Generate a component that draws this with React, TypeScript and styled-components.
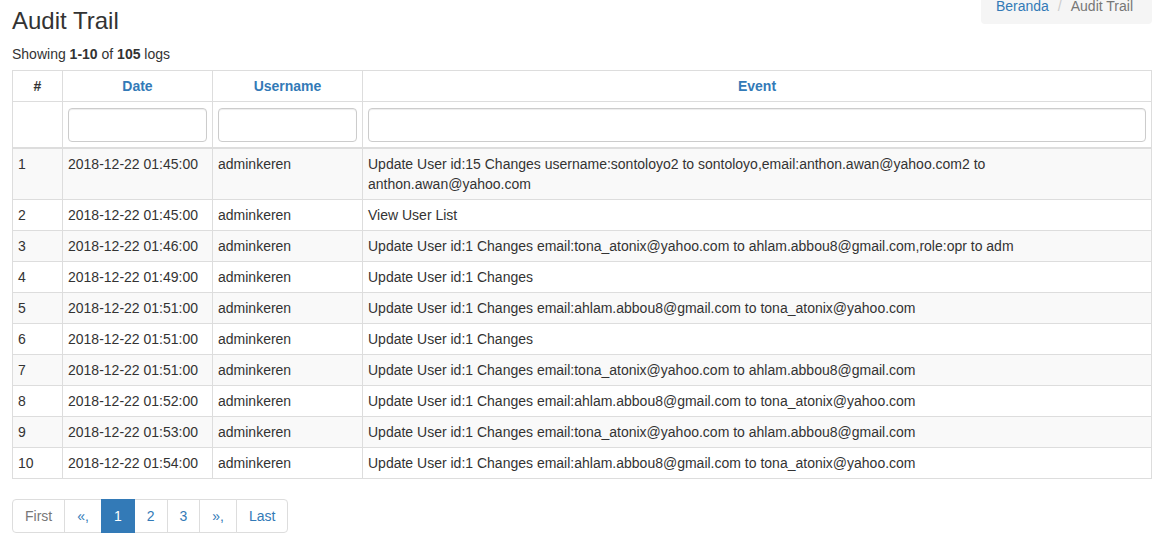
import React from "react";
import styled, { createGlobalStyle } from "styled-components";

const Global = createGlobalStyle`
  html, body { margin: 0; padding: 0; background: #fff; }
  body {
    font-family: "Liberation Sans", Arial, Helvetica, sans-serif;
    font-size: 14px;
    line-height: 20px;
    color: #333;
  }
  * { box-sizing: border-box; }
`;

const Page = styled.div`
  padding: 0 9px 0 12px;
`;

const HeaderBar = styled.div`
  display: flex;
  justify-content: space-between;
  align-items: flex-start;
`;

const Title = styled.h1`
  margin: 7px 0 0 0;
  font-size: 24px;
  line-height: 28px;
  font-weight: 400;
  color: #333;
`;

const Breadcrumb = styled.ol`
  display: flex;
  list-style: none;
  margin: -12px 0 0 0;
  padding: 8px 19px 8px 15px;
  background: #f5f5f5;
  border-radius: 4px;
  font-size: 14px;
  line-height: 20px;
  li + li::before {
    content: "/";
    color: #ccc;
    padding: 0 9px;
  }
`;

const Crumb = styled.li<{ $active?: boolean }>`
  color: ${(p) => (p.$active ? "#777" : "#337ab7")};
`;

const Summary = styled.div`
  margin: 9px 0 6px 0;
  font-size: 14px;
  line-height: 20px;
  b { font-weight: 700; }
`;

const Table = styled.table`
  width: 100%;
  border-collapse: collapse;
  border: 1px solid #ddd;
  font-size: 14px;
  line-height: 20px;
`;

const Th = styled.th<{ $link?: boolean; $w?: number }>`
  border: 1px solid #ddd;
  padding: 5px;
  text-align: center;
  font-weight: 700;
  color: ${(p) => (p.$link ? "#337ab7" : "#333")};
  width: ${(p) => (p.$w ? `${p.$w}px` : "auto")};
`;

const FilterCell = styled.td`
  border: 1px solid #ddd;
  border-bottom: 2px solid #ddd;
  padding: 6px 5px 5px 5px;
`;

const FilterInput = styled.input`
  display: block;
  width: 100%;
  height: 34px;
  border: 1px solid #ccc;
  border-radius: 4px;
  padding: 6px 12px;
  font: inherit;
  background: #fff;
  box-shadow: inset 0 1px 1px rgba(0, 0, 0, 0.075);
`;

const Row = styled.tr<{ $odd: boolean }>`
  background: ${(p) => (p.$odd ? "#f9f9f9" : "#fff")};
`;

const Td = styled.td`
  border: 1px solid #ddd;
  padding: 5px;
  vertical-align: top;
`;

const Pager = styled.ul`
  display: inline-flex;
  list-style: none;
  padding: 0;
  margin: 20px 0 0 0;
`;

const PageItem = styled.li<{ $active?: boolean; $muted?: boolean }>`
  padding: 6px 12px;
  line-height: 20px;
  font-size: 14px;
  border: 1px solid #ddd;
  margin-left: -1px;
  background: ${(p) => (p.$active ? "#337ab7" : "#fff")};
  border-color: ${(p) => (p.$active ? "#337ab7" : "#ddd")};
  color: ${(p) => (p.$active ? "#fff" : p.$muted ? "#777" : "#337ab7")};
  position: relative;
  z-index: ${(p) => (p.$active ? 2 : 1)};
  &:first-child {
    margin-left: 0;
    border-radius: 4px 0 0 4px;
  }
  &:last-child {
    border-radius: 0 4px 4px 0;
  }
`;

const rows: [string, string, string][] = [
  ["1", "2018-12-22 01:45:00", "Update User id:15 Changes username:sontoloyo2 to sontoloyo,email:anthon.awan@yahoo.com2 to anthon.awan@yahoo.com"],
  ["2", "2018-12-22 01:45:00", "View User List"],
  ["3", "2018-12-22 01:46:00", "Update User id:1 Changes email:tona_atonix@yahoo.com to ahlam.abbou8@gmail.com,role:opr to adm"],
  ["4", "2018-12-22 01:49:00", "Update User id:1 Changes"],
  ["5", "2018-12-22 01:51:00", "Update User id:1 Changes email:ahlam.abbou8@gmail.com to tona_atonix@yahoo.com"],
  ["6", "2018-12-22 01:51:00", "Update User id:1 Changes"],
  ["7", "2018-12-22 01:51:00", "Update User id:1 Changes email:tona_atonix@yahoo.com to ahlam.abbou8@gmail.com"],
  ["8", "2018-12-22 01:52:00", "Update User id:1 Changes email:ahlam.abbou8@gmail.com to tona_atonix@yahoo.com"],
  ["9", "2018-12-22 01:53:00", "Update User id:1 Changes email:tona_atonix@yahoo.com to ahlam.abbou8@gmail.com"],
  ["10", "2018-12-22 01:54:00", "Update User id:1 Changes email:ahlam.abbou8@gmail.com to tona_atonix@yahoo.com"],
];

export default function App() {
  return (
    <Page>
      <Global />
      <HeaderBar>
        <Title>Audit Trail</Title>
        <Breadcrumb>
          <Crumb>Beranda</Crumb>
          <Crumb $active>Audit Trail</Crumb>
        </Breadcrumb>
      </HeaderBar>
      <Summary>
        Showing <b>1-10</b> of <b>105</b> logs
      </Summary>
      <Table>
        <thead>
          <tr>
            <Th $w={50}>#</Th>
            <Th $link $w={150}>Date</Th>
            <Th $link $w={150}>Username</Th>
            <Th $link>Event</Th>
          </tr>
          <tr>
            <FilterCell />
            <FilterCell><FilterInput /></FilterCell>
            <FilterCell><FilterInput /></FilterCell>
            <FilterCell><FilterInput /></FilterCell>
          </tr>
        </thead>
        <tbody>
          {rows.map(([n, d, e], i) => (
            <Row key={n} $odd={i % 2 === 0}>
              <Td>{n}</Td>
              <Td>{d}</Td>
              <Td>adminkeren</Td>
              <Td>{e}</Td>
            </Row>
          ))}
        </tbody>
      </Table>
      <Pager>
        <PageItem $muted>First</PageItem>
        <PageItem>«,</PageItem>
        <PageItem $active>1</PageItem>
        <PageItem>2</PageItem>
        <PageItem>3</PageItem>
        <PageItem>»,</PageItem>
        <PageItem>Last</PageItem>
      </Pager>
    </Page>
  );
}
